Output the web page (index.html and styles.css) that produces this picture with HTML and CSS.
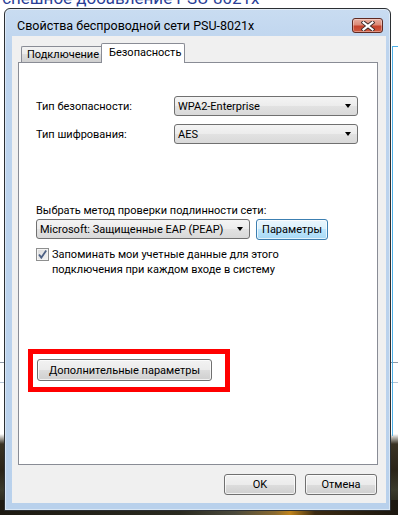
FILE: index.html
```html
<!DOCTYPE html>
<html lang="ru">
<head>
<meta charset="utf-8">
<title>Свойства беспроводной сети PSU-8021x</title>
<link rel="stylesheet" href="styles.css">
</head>
<body>
<div class="desktop">
  <div class="bg-title">Успешное добавление PSU-8021x</div>
  <div class="window">
    <div class="titlebar">
      <div class="title">Свойства беспроводной сети PSU-8021x</div>
      <div class="close">
        <svg width="14" height="10" viewBox="0 0 14 10">
          <path d="M2.5 1.5 L11.5 8.5 M11.5 1.5 L2.5 8.5" stroke="#3b2a2a" stroke-width="4" stroke-linecap="square" fill="none"/>
          <path d="M2.5 1.5 L11.5 8.5 M11.5 1.5 L2.5 8.5" stroke="#ffffff" stroke-width="2.2" stroke-linecap="square" fill="none"/>
        </svg>
      </div>
    </div>
    <div class="client">
      <div class="tabs">
        <div class="tab">Подключение</div>
        <div class="tab tab-active">Безопасность</div>
      </div>
      <div class="panel">
        <div class="form-grid">
          <div class="label">Тип безопасности:</div>
          <div class="combo combo-wide"><span>WPA2-Enterprise</span><i class="arrow"></i></div>
          <div class="label">Тип шифрования:</div>
          <div class="combo combo-wide"><span>AES</span><i class="arrow"></i></div>
        </div>
        <div class="auth-label">Выбрать метод проверки подлинности сети:</div>
        <div class="auth-row">
          <div class="combo combo-eap"><span>Microsoft: Защищенные EAP (PEAP)</span><i class="arrow"></i></div>
          <div class="btn btn-hot">Параметры</div>
        </div>
        <div class="check-row">
          <div class="checkbox">
            <svg width="11" height="11" viewBox="0 0 11 11">
              <path d="M2 5.5 L4.3 8.6 L9.2 1.6" stroke="#4d6185" stroke-width="1.8" fill="none"/>
            </svg>
          </div>
          <div class="check-text">Запоминать мои учетные данные для этого<br>подключения при каждом входе в систему</div>
        </div>
        <div class="highlight">
          <div class="btn btn-advanced">Дополнительные параметры</div>
        </div>
      </div>
      <div class="buttons">
        <div class="btn btn-dialog">OK</div>
        <div class="btn btn-dialog">Отмена</div>
      </div>
    </div>
  </div>
</div>
</body>
</html>
```
FILE: styles.css
```css
* { box-sizing: border-box; }
html, body { margin: 0; padding: 0; }
body {
  font-family: Roboto, "Liberation Sans", Arial, sans-serif;
  font-size: 11px;
  color: #000;
  background: #fff;
}
.desktop {
  position: relative;
  width: 398px;
  height: 515px;
  overflow: hidden;
  background:
    linear-gradient(#4fb0e6, #4fb0e6) 392px 46px / 6px 1px no-repeat,
    linear-gradient(#4fb0e6, #4fb0e6) 392px 46px / 1px 390px no-repeat,
    linear-gradient(#8f99a6, #8f99a6) 0 362px / 100% 1px no-repeat,
    linear-gradient(#b4c3d3, #b4c3d3) 0 382px / 100% 1px no-repeat,
    linear-gradient(to right, #1d1a12 0, #2a2a20 180px, #4b4a3c 235px, #8a6a30 275px, #c0841c 290px, #3a2a12 315px, #1b1710 100%) 0 500px / 100% 15px no-repeat,
    linear-gradient(to bottom, #ffffff 0, #ffffff 434px, #3a3324 444px, #2a2418 470px, #3a3a2c 490px, #1d1a12 100%);
}
.bg-title {
  margin-top: -13px;
  margin-left: -8px;
  font-size: 17px;
  color: #2a3f97;
  white-space: nowrap;
  line-height: 22px;
}
.window {
  position: absolute;
  left: 4px;
  top: 8px;
  width: 387px;
  height: 503px;
  border: 1px solid #2b2f33;
  border-radius: 6px 6px 0 0;
  background: linear-gradient(to bottom, #c9dcf1 0, #bdd4ee 40px, #b9d1ec 100%);
  box-shadow: inset 0 0 0 1px rgba(255,255,255,0.45);
  display: flex;
  flex-direction: column;
  padding: 0 4px 7px 7px;
}
.titlebar {
  height: 27px;
  display: flex;
  align-items: flex-start;
  justify-content: space-between;
}
.title {
  font-size: 12.5px;
  margin-top: 9px;
  margin-left: 5px;
  line-height: 16px;
  color: #000;
}
.close {
  margin-top: 9px;
  margin-right: 3px;
  width: 31px;
  height: 15px;
  border: 1px solid #5f2a22;
  border-radius: 3px;
  background: linear-gradient(to bottom, #e9ad9f 0, #dc8a76 45%, #c6432d 55%, #cf5a3f 100%);
  box-shadow: inset 0 0 0 1px rgba(255,255,255,0.35);
  display: flex;
  align-items: center;
  justify-content: center;
}
.close svg { display: block; }
.client {
  flex: 1;
  background: #f0f0f0;
  padding: 7px 8px 8px 6px;
  display: flex;
  flex-direction: column;
}
.tabs {
  display: flex;
  align-items: flex-end;
  padding-left: 3px;
  height: 19px;
  position: relative;
  z-index: 1;
}
.tab {
  height: 16px;
  padding: 0 0 0 5px;
  width: 80px;
  border: 1px solid #898c95;
  border-bottom: none;
  border-right: none;
  background: linear-gradient(to bottom, #f2f2f2 0, #ebebeb 50%, #dddddd 50%, #cfcfcf 100%);
  line-height: 15px;
  border-radius: 2px 0 0 0;
}
.tab-active {
  height: 20px;
  width: 84px;
  margin-bottom: -1px;
  background: #fff;
  border-right: 1px solid #898c95;
  padding-left: 7px;
  line-height: 17px;
  border-radius: 2px 2px 0 0;
}
.panel {
  height: 403px;
  border: 1px solid #898c95;
  background: #fff;
  padding: 33px 0 0 17px;
  display: flex;
  flex-direction: column;
  align-items: flex-start;
}
.form-grid {
  display: grid;
  grid-template-columns: 138px 184px;
  row-gap: 8px;
  align-items: center;
}
.label { line-height: 15px; }
.combo {
  height: 20px;
  border: 1px solid #707070;
  border-radius: 3px;
  background: linear-gradient(to bottom, #f4f4f4 0, #ececec 50%, #e2e2e2 50%, #d9d9d9 100%);
  display: flex;
  align-items: center;
  justify-content: space-between;
  padding: 0 6px 0 3px;
  line-height: 15px;
}
.arrow {
  width: 0;
  height: 0;
  border-left: 3.5px solid transparent;
  border-right: 3.5px solid transparent;
  border-top: 4px solid #000;
}
.auth-label {
  margin-top: 59px;
  line-height: 15px;
}
.auth-row {
  margin-top: 1px;
  display: flex;
  align-items: flex-start;
  gap: 6px;
}
.combo-eap { width: 214px; }
.btn {
  height: 21px;
  border: 1px solid #707070;
  border-radius: 3px;
  background: linear-gradient(to bottom, #f2f2f2 0, #ebebeb 50%, #dddddd 50%, #cfcfcf 100%);
  box-shadow: inset 0 0 0 1px rgba(255,255,255,0.7);
  display: flex;
  align-items: center;
  justify-content: center;
  line-height: 15px;
}
.btn-hot {
  width: 72px;
  border-color: #3c7fb1;
  background: linear-gradient(to bottom, #eaf6fd 0, #d9f0fc 50%, #bee6fd 50%, #a7d9f5 100%);
}
.check-row {
  margin-top: 7px;
  display: flex;
  align-items: flex-start;
  gap: 3px;
}
.checkbox {
  width: 13px;
  height: 13px;
  border: 1px solid #8e8f8f;
  background: linear-gradient(135deg, #dcdcdc 0, #f4f4f4 100%);
  box-shadow: inset 0 0 0 1px #f4f4f4;
  display: flex;
  align-items: center;
  justify-content: center;
  margin-top: 1px;
}
.checkbox svg { display: block; }
.check-text { line-height: 15px; }
.highlight {
  margin-top: 72px;
  margin-left: -8px;
  width: 202px;
  height: 43px;
  border: 5px solid #ff0000;
  padding: 5px 0 0 4px;
}
.btn-advanced { width: 175px; height: 22px; }
.buttons {
  margin-top: 9px;
  display: flex;
  justify-content: flex-end;
  gap: 9px;
  padding-right: 1px;
}
.btn-dialog { width: 72px; }
```
